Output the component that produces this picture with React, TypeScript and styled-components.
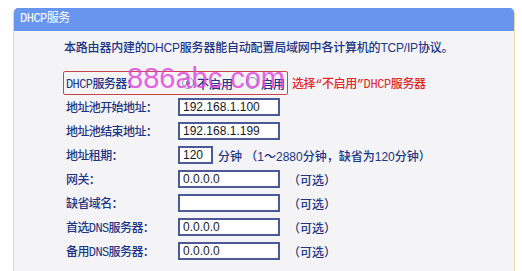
import React from "react";
import styled, { createGlobalStyle } from "styled-components";

const Global = createGlobalStyle`
  html, body { margin: 0; padding: 0; background: #ffffff; }
  body { font-family: "Liberation Sans", "Noto Sans CJK SC", sans-serif; font-size: 12px; }
`;

const Page = styled.div`
  position: relative;
  padding: 8px 0 0 13px;
  width: 522px;
  height: 271px;
  box-sizing: border-box;
  overflow: hidden;
`;

const Panel = styled.div`
  width: 502px;
  border-left: 1px solid #e6d9a6;
  border-right: 1px solid #e6d9a6;
  box-sizing: border-box;
  border-radius: 5px 5px 0 0;
  overflow: hidden;
  background: #f4f4f6;
  height: 300px;
`;

const Header = styled.div`
  height: 23px;
  background: #6896ef;
  color: #ffffff;
  font-family: "Liberation Mono", "Noto Sans CJK SC", monospace;
  font-size: 12px;
  line-height: 23px;
  padding-left: 6px;
  letter-spacing: -0.5px;
`;

const Body = styled.div`
  padding: 9px 0 0 49px;
  color: #1c3482;
  font-weight: 500;
  font-family: "Liberation Sans", "Noto Sans CJK SC", sans-serif;
`;

const Intro = styled.div`
  height: 16px;
  line-height: 16px;
  padding-left: 1px;
  margin-bottom: 15px;
  white-space: nowrap;
  letter-spacing: -0.2px;
`;

const Form = styled.div`
  display: flex;
  flex-direction: column;
`;

const Row = styled.div`
  display: grid;
  grid-template-columns: 112px auto;
  align-items: center;
  height: 24px;
  padding-left: 3px;
`;

const HighlightRow = styled.div`
  display: flex;
  align-items: center;
  height: 24px;
`;

const HighlightBox = styled.div`
  display: grid;
  grid-template-columns: 112px auto;
  align-items: center;
  box-sizing: border-box;
  width: 225px;
  height: 24px;
  padding-left: 2px;
  border: 1px solid #c9474a;
  border-radius: 2px;
`;

const Label = styled.span`
  white-space: nowrap;
  font-family: "Liberation Mono", "Noto Sans CJK SC", monospace;
  letter-spacing: -0.6px;
`;

const Value = styled.div`
  display: flex;
  align-items: center;
  white-space: nowrap;
`;

const TextBox = styled.div<{ $w: number }>`
  box-sizing: border-box;
  width: ${(p) => p.$w}px;
  height: 18px;
  border: 2px solid #4b5a96;
  background: #ffffff;
  color: #1a1a1a;
  font-weight: 400;
  font-family: "Liberation Sans", sans-serif;
  font-size: 12px;
  line-height: 14px;
  padding-left: 3px;
`;

const Note = styled.span<{ $gap: number }>`
  margin-left: ${(p) => p.$gap}px;
  white-space: nowrap;
`;

const Radio = styled.span<{ $checked?: boolean }>`
  position: relative;
  display: inline-block;
  width: 10px;
  height: 10px;
  border-radius: 50%;
  border: 1px solid #8798ad;
  background: radial-gradient(circle at 40% 40%, #ffffff 0%, #e6e9ee 100%);
  margin: 0 3px 0 ${(p) => (p.$checked ? 4 : 13)}px;
  &::after {
    content: "";
    display: ${(p) => (p.$checked ? "block" : "none")};
    position: absolute;
    left: 3px;
    top: 3px;
    width: 4px;
    height: 4px;
    border-radius: 50%;
    background: #3aa53a;
  }
`;

const Hint = styled.span`
  margin-left: 4px;
  color: #e0262a;
  white-space: nowrap;
  font-family: "Liberation Mono", "Noto Sans CJK SC", monospace;
  letter-spacing: -0.4px;
`;

const Watermark = styled.div`
  position: absolute;
  left: 127px;
  top: 64px;
  font-family: "Liberation Sans", sans-serif;
  font-size: 29px;
  line-height: 29px;
  color: #e044e0;
  opacity: 0.82;
  pointer-events: none;
  white-space: nowrap;
`;

const rows: { label: string; value: string; w: number; note?: string; gap?: number }[] = [
  { label: "地址池开始地址：", value: "192.168.1.100", w: 102 },
  { label: "地址池结束地址：", value: "192.168.1.199", w: 102 },
  { label: "地址租期：", value: "120", w: 35, note: "分钟 （1～2880分钟，缺省为120分钟）", gap: 5 },
  { label: "网关：", value: "0.0.0.0", w: 102, note: "（可选）", gap: 8 },
  { label: "缺省域名：", value: "", w: 102, note: "（可选）", gap: 8 },
  { label: "首选DNS服务器：", value: "0.0.0.0", w: 102, note: "（可选）", gap: 8 },
  { label: "备用DNS服务器：", value: "0.0.0.0", w: 102, note: "（可选）", gap: 8 },
];

export default function App() {
  return (
    <Page>
      <Global />
      <Panel>
        <Header>DHCP服务</Header>
        <Body>
          <Intro>本路由器内建的DHCP服务器能自动配置局域网中各计算机的TCP/IP协议。</Intro>
          <Form>
            <HighlightRow>
              <HighlightBox>
                <Label>DHCP服务器：</Label>
                <Value>
                  <Radio $checked />
                  不启用
                  <Radio />
                  启用
                </Value>
              </HighlightBox>
              <Hint>选择“不启用”DHCP服务器</Hint>
            </HighlightRow>
            {rows.map((r) => (
              <Row key={r.label}>
                <Label>{r.label}</Label>
                <Value>
                  <TextBox $w={r.w}>{r.value}</TextBox>
                  {r.note && <Note $gap={r.gap ?? 8}>{r.note}</Note>}
                </Value>
              </Row>
            ))}
          </Form>
        </Body>
      </Panel>
      <Watermark>886abc.com</Watermark>
    </Page>
  );
}
